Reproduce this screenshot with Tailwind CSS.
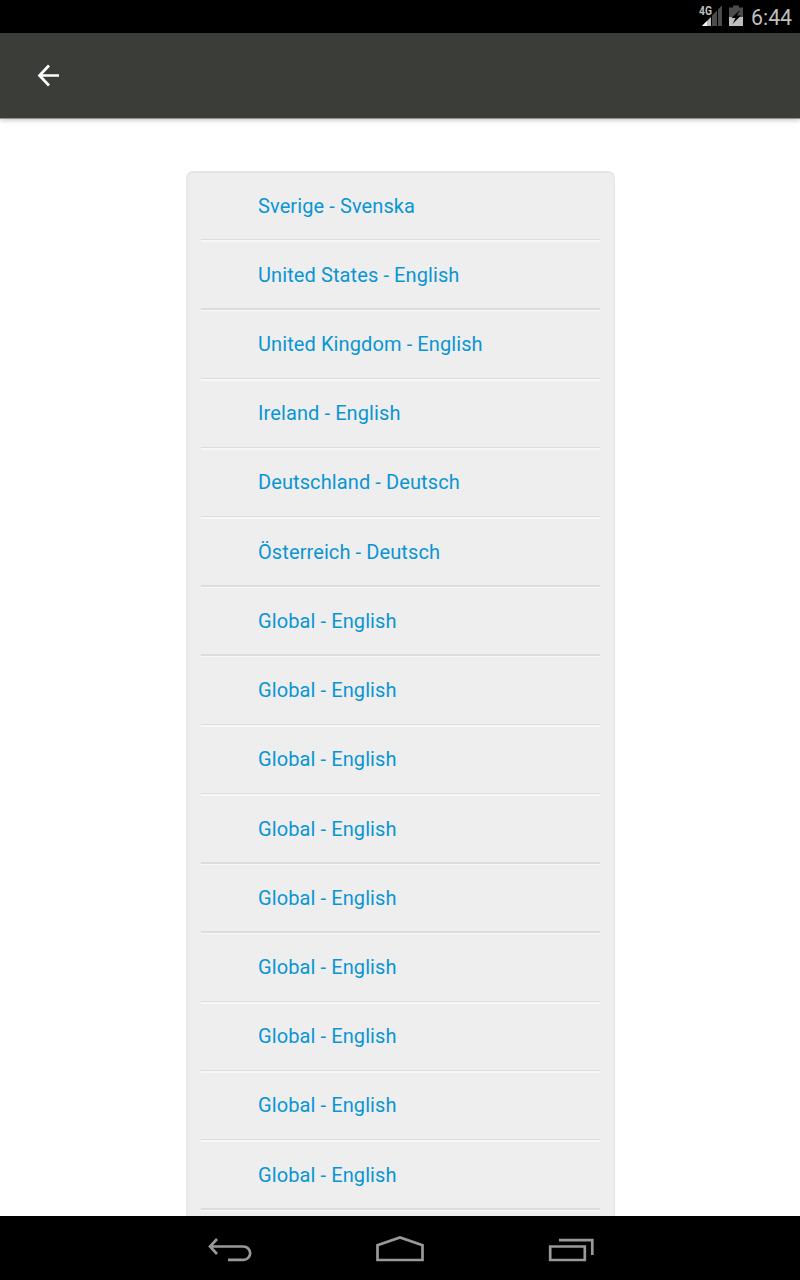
<!DOCTYPE html>
<html lang="en">
<head>
<meta charset="utf-8">
<title>Choose country</title>
<script src="https://cdn.jsdelivr.net/npm/@tailwindcss/browser@4"></script>
</head>
<body class="bg-white font-['Roboto',sans-serif]">
<div class="flex h-[1280px] w-[800px] flex-col overflow-hidden">
  <div class="flex h-[33px] shrink-0 items-start justify-end bg-black pr-[8px]">
    <svg class="h-[33px] w-[52px]" viewBox="698 0 52 33">
      <path d="M722 5.500V26H718V9.500Z M717 10.500V26H712V15.500Z" fill="#4a4d4a"/>
      <path d="M711 17V26H702Z" fill="#bebebe"/>
      <path d="M707 21V26H702Z" fill="#f0f0f0"/>
      <text transform="translate(699 15.300) scale(.78 1)" font-family="Roboto" font-size="13.200" font-weight="700" fill="#bebebe">4G</text>
      <path d="M733 5.500H739V7.500H743V17H729V7.500H733Z" fill="#4a4d4a"/>
      <path d="M729 17H743V26H729Z" fill="#bebebe"/>
      <path d="M740 10L731.500 18H735.500L732.500 24L741 15.500H737Z" fill="#000"/>
    </svg>
    <span class="ml-px w-[41px] whitespace-nowrap text-[21.300px] leading-[35px] text-[#bebebe]">6:44</span>
  </div>
  <header class="z-10 flex h-[85px] shrink-0 items-center bg-[#3b3d39] pb-[2px] pl-[36px] shadow-[0_1px_0_#8f8f8d,0_2px_5px_rgba(0,0,0,0.25)]">
    <svg class="h-[24px] w-[24px]" viewBox="0 0 24 24" fill="none" stroke="#fff" stroke-width="2.700"><path d="M23 12.500H4M13 2.500L3.500 12.500L13 22.500"/></svg>
  </header>
  <main class="flex min-h-0 flex-1 justify-center overflow-hidden pt-[53px] pl-px">
    <ul id="countries" class="h-[1100px] w-[429px] shrink-0 rounded-[7px] border border-t-2 border-l-2 border-[#e4e4e4] border-l-[#e9e9e9] bg-[#eee] pr-[14px] pl-[13px] text-[20px] leading-[24px] tracking-[0.1px] text-[#0a95d3]"></ul>
  </main>
  <nav class="flex h-[64px] shrink-0 bg-black">
    <svg class="h-[64px] w-[800px]" viewBox="0 1216 800 64" fill="none" stroke="#999" stroke-width="2.700">
      <path d="M217 1239L210 1246.500L217 1254M210 1246.500H243.500A6.600 6.600 0 0 1 243.500 1259.800H228"/>
      <path d="M377.500 1260V1245.300L400 1237.500L422.500 1245.300V1260Z"/>
      <path d="M550.200 1246.500H584.800V1260H550.200ZM559 1240.200H592.300V1255"/>
    </svg>
  </nav>
</div>
<script>
(() => {
  const names = ["Sverige - Svenska", "United States - English", "United Kingdom - English", "Ireland - English", "Deutschland - Deutsch", "Österreich - Deutsch", ...Array(9).fill("Global - English")];
  const lines = [239, 308, 378, 447, 516, 585, 654, 724, 793, 862, 931, 1001, 1070, 1139, 1208];
  const centers = [206, 275, 344, 413, 482, 552, 621, 690, 759, 829, 898, 967, 1036, 1105, 1175];
  const wide = [1, 5, 6, 9, 10, 14];
  let rowTop = 173;
  document.getElementById("countries").innerHTML = names.map((name, i) => {
    const height = lines[i] + 3 - rowTop;
    const pad = centers[i] - 12 - rowTop;
    rowTop += height;
    const rule = wide.includes(i)
      ? '<span class="h-[2px] bg-[#dcdcdc]"></span><span class="h-px bg-[#f8f8f8]"></span>'
      : '<span class="h-px bg-[#dcdcdc]"></span><span class="h-[2px] bg-[#f7f7f7]"></span>';
    return `<li class="flex flex-col" style="height:${height}px;padding-top:${pad}px"><a class="flex-1 pl-[57px] whitespace-nowrap">${name}</a>${rule}</li>`;
  }).join("");
})();
</script>
</body>
</html>
